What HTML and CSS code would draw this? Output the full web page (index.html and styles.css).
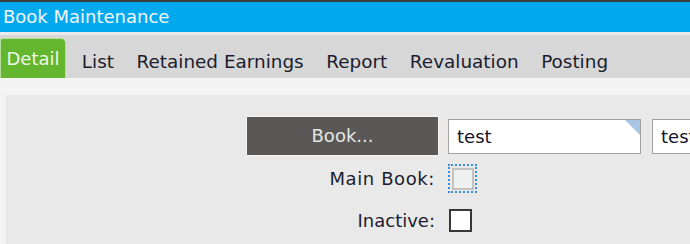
FILE: index.html
```html
<!DOCTYPE html>
<html>
<head>
<meta charset="utf-8">
<link rel="stylesheet" href="styles.css">
</head>
<body>
<div class="window">
  <div class="titlebar">Book Maintenance</div>
  <div class="tabbar">
    <div class="tab active">Detail</div>
    <div class="tab first">List</div>
    <div class="tab">Retained Earnings</div>
    <div class="tab">Report</div>
    <div class="tab">Revaluation</div>
    <div class="tab">Posting</div>
  </div>
  <div class="content">
    <div class="panel">
      <div class="row row-book">
        <div class="book-btn">Book...</div>
        <div class="field corner">test</div>
        <div class="field field2">test</div>
      </div>
      <div class="row row-main">
        <div class="label label-main">Main Book:</div>
        <div class="focus"><div class="check check-soft"></div></div>
      </div>
      <div class="row row-inactive">
        <div class="label">Inactive:</div>
        <div class="check check-dark"></div>
      </div>
    </div>
  </div>
</div>
</body>
</html>
```

FILE: styles.css
```css
html, body {
  margin: 0;
  padding: 0;
  width: 690px;
  height: 244px;
  overflow: hidden;
  background: #f4f4f4;
  font-family: "DejaVu Sans", Verdana, sans-serif;
  font-size: 18px;
}
.window {
  border-top: 2px solid #3e3e3e;
}
.titlebar {
  height: 30px;
  line-height: 30px;
  background: #03a9ef;
  color: #f2f8ff;
  padding-left: 3px;
  white-space: nowrap;
}
.tabbar {
  margin-top: 3px;
  background: #d7d7d7;
  height: 43px;
  display: flex;
  align-items: flex-end;
  box-shadow: 0 -3px 0 #e9e9e9;
  white-space: nowrap;
}
.tab {
  height: 40px;
  line-height: 40px;
  padding: 4px 11.3px 0;
  box-sizing: border-box;
  color: #1c1c2e;
  font-size: 18.4px;
}
.tab.first {
  margin-left: 4.5px;
}
.tab.active {
  width: 66px;
  padding: 0;
  font-size: 18px;
  text-align: center;
  background: #63b62e;
  color: #eef8e6;
  border: 1px solid #b9df9f;
  border-bottom: 0;
  border-radius: 3px 5px 0 0;
}
.content {
  padding: 17px 0 0 5px;
}
.panel {
  background: #e9e9e9;
  height: 160px;
  padding: 21px 0 0 240px;
  border-left: 1px solid #f0f0f0;
}
.row {
  display: flex;
  align-items: center;
  white-space: nowrap;
}
.book-btn {
  width: 191px;
  height: 38px;
  flex: none;
  background: #5a5856;
  border: 1px solid #f6f6f6;
  color: #e6e6e6;
  text-align: center;
  line-height: 38px;
}
.field {
  position: relative;
  flex: none;
  box-sizing: border-box;
  width: 193px;
  height: 35px;
  line-height: 33px;
  margin-left: 9px;
  background: #ffffff;
  border: 1px solid #a2a2a2;
  padding-left: 8px;
  color: #14142a;
}
.field.corner::after {
  content: "";
  position: absolute;
  top: 0;
  right: 0;
  width: 0;
  height: 0;
  border-top: 15px solid #a8c5e3;
  border-left: 15px solid transparent;
}
.field2 {
  margin-left: 11px;
  width: 100px;
}
.row-main {
  margin-top: 8px;
}
.row-inactive {
  margin-top: 16px;
}
.label {
  width: 189px;
  flex: none;
  padding-right: 4px;
  text-align: right;
  color: #1c1c30;
}
.label-main {
  letter-spacing: 0.6px;
}
.focus {
  margin-left: 9px;
  box-sizing: border-box;
  width: 29px;
  height: 29px;
  border: 2px dotted #3a8ee0;
  display: flex;
  align-items: center;
  justify-content: center;
}
.check {
  box-sizing: border-box;
}
.check-soft {
  width: 22px;
  height: 22px;
  border: 2px solid #c2c2c2;
  background: #eff1f1;
}
.check-dark {
  margin-left: 10px;
  width: 23px;
  height: 23px;
  border: 2px solid #383838;
  background: #ffffff;
}
```
